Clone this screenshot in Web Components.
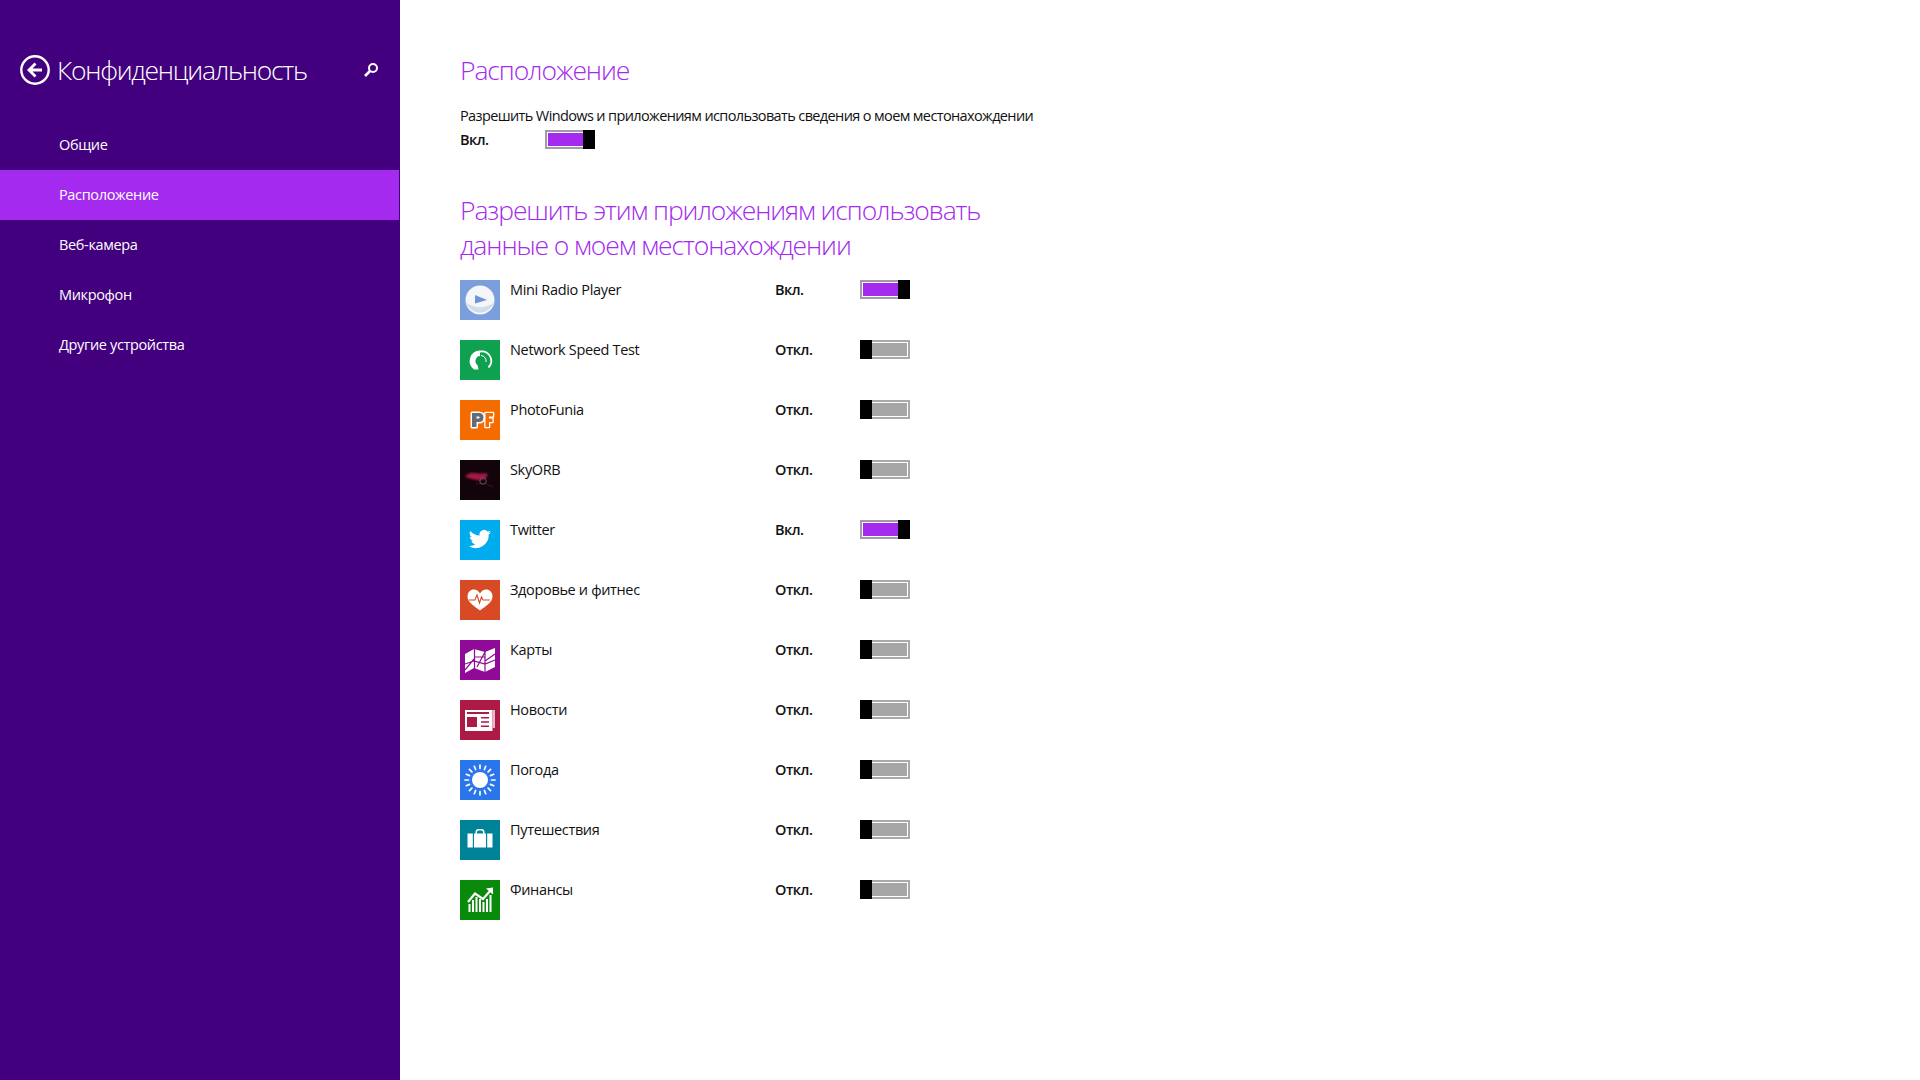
<!DOCTYPE html>
<html lang="ru">
<head>
<meta charset="utf-8">
<title>Конфиденциальность</title>
<style>
  html, body { margin: 0; padding: 0; height: 100%; background: #fff; }
  body { font-family: "Open Sans", "Noto Sans", sans-serif; overflow: hidden; }
  privacy-page { height: 100%; }
</style>
</head>
<body>
<privacy-page>
  <side-bar slot="side" heading="Конфиденциальность">
    <nav-item>Общие</nav-item>
    <nav-item selected>Расположение</nav-item>
    <nav-item>Веб-камера</nav-item>
    <nav-item>Микрофон</nav-item>
    <nav-item>Другие устройства</nav-item>
  </side-bar>
  <location-panel>
    <app-row name="Mini Radio Player" icon="radio" on></app-row>
    <app-row name="Network Speed Test" icon="speed"></app-row>
    <app-row name="PhotoFunia" icon="funia"></app-row>
    <app-row name="SkyORB" icon="sky"></app-row>
    <app-row name="Twitter" icon="twitter" on></app-row>
    <app-row name="Здоровье и фитнес" icon="health"></app-row>
    <app-row name="Карты" icon="maps"></app-row>
    <app-row name="Новости" icon="news"></app-row>
    <app-row name="Погода" icon="weather"></app-row>
    <app-row name="Путешествия" icon="travel"></app-row>
    <app-row name="Финансы" icon="finance"></app-row>
  </location-panel>
</privacy-page>

<script>
const ICONS = {
  radio: {bg: '#7b9fdc', svg: `
    <circle cx="20" cy="20" r="14.5" fill="#f4f6fa"/>
    <path d="M6 22a14.500 14.500 0 0 0 28 0a16 10 0 0 1-28 0z" fill="#d5dbe8"/>
    <path d="M15 15l12 5-12 3.500z" fill="#6f94d6"/>`},
  speed: {bg: '#0fa14f', svg: `
    <path d="M14 29.500A10.500 10.500 0 0 1 20 10.500V16A5 5 0 0 0 17.500 25L18.500 29.500z" fill="#fff"/>
    <path d="M20 11.500A9.500 9.500 0 0 1 28.500 27.500" fill="none" stroke="#fff" stroke-width="1.800"/>
    <path d="M21 15.500A5.500 5.500 0 0 1 26 22" fill="none" stroke="#fff" stroke-width="1"/>`},
  funia: {bg: '#f46c00', svg: `
    <path d="M12 13h7q4.500 0 4.500 4.500t-4.500 4.500h-2.500v5H12z M16.500 16.500v2h2q1.200 0 1.200-1t-1.200-1z" fill="#666b78" fill-rule="evenodd" stroke="#fff" stroke-width="3" stroke-linejoin="round" paint-order="stroke"/>
    <path d="M25.500 13H33v3.500h-4v2h3.500V22H29v5h-3.500z" fill="#f46c00" stroke="#fff" stroke-width="2.600" stroke-linejoin="round" paint-order="stroke"/>`},
  sky: {bg: '#13030b', svg: `
    <defs><filter id="soft"><feGaussianBlur stdDeviation="0.8"/></filter></defs>
    <path d="M5 17q4-5 10-4t11 0q3 2 0 5-5 3-10 2t-11-3z" fill="#a81845" filter="url(#soft)"/>
    <circle cx="23" cy="21" r="3.200" fill="none" stroke="#6a5a60" stroke-width="1"/>
    <path d="M16 23l4 1M26 24l7 3" stroke="#4c1026" stroke-width="1"/>`},
  twitter: {bg: '#00aced', svg: `
    <path d="M31 12.200a8.800 8.800 0 0 1-2.600.7 4.500 4.500 0 0 0 2-2.500 9 9 0 0 1-2.900 1.100 4.500 4.500 0 0 0-7.800 4.100A12.900 12.900 0 0 1 10.400 11a4.500 4.500 0 0 0 1.400 6 4.500 4.500 0 0 1-2-.6c0 2.300 1.600 4.100 3.600 4.500a4.500 4.500 0 0 1-2 .1 4.500 4.500 0 0 0 4.200 3.100A9.100 9.100 0 0 1 9 26a12.800 12.800 0 0 0 19.700-11.400A9 9 0 0 0 31 12.200z" fill="#fff"/>`},
  health: {bg: '#d84a26', svg: `
    <path d="M20 30.500C14 26 7.500 22 7.500 16.500a6.500 6.500 0 0 1 12.500-3A6.500 6.500 0 0 1 32.500 16.500c0 5.500-6.500 9.500-12.500 14z" fill="#fff"/>
    <path d="M9 20h6l2-5 2.500 8 2-6 1.500 3h7" fill="none" stroke="#d84a26" stroke-width="1.100"/>`},
  maps: {bg: '#8f0a96', svg: `
    <path d="M5 14l9-5 11 3 10-4v19l-10 5-11-4-9 5z" fill="#fff"/>
    <path d="M14.500 8v24M25 11v22M5 24l9-3 11 3 10-4M5 30l9-11M25 21l10-7M17 27l8-15M14.500 17H25" fill="none" stroke="#8f0a96" stroke-width="1.200"/>`},
  news: {bg: '#ac1a45', svg: `
    <path d="M5 10h27.500v21H5z" fill="#fff"/>
    <path d="M32.500 10H35v18h-2.500z" fill="#e9b9c6"/>
    <path d="M7 12h22v2H7zM7 17h10v10H7zM21 17h8v1.600h-8zM21 21.200h8v1.600h-8zM21 25.400h8V27h-8z" fill="#ac1a45"/>`},
  weather: {bg: '#2b75ea', svg: `
    <circle cx="20" cy="20" r="8" fill="#fff"/>
    <g stroke="#fff" stroke-width="1.700" stroke-linecap="round">
      <path d="M20 5v3.500M20 31.500V35M5 20h3.500M31.500 20H35M9.400 9.400l2.500 2.500M28.100 28.100l2.500 2.500M9.400 30.600l2.500-2.500M28.100 11.900l2.500-2.500M14.300 6.300l1.300 3.200M24.400 30.500l1.300 3.200M6.300 25.700l3.200-1.300M30.500 15.600l3.200-1.300M6.300 14.300l3.200 1.300M30.500 24.400l3.200 1.300M14.300 33.700l1.300-3.200M24.400 9.500l1.300-3.200"/>
    </g>`},
  travel: {bg: '#008299', svg: `
    <path d="M7.500 13.500h5.300v14H7.500zM27.200 13.500h5.300v14h-5.300z" fill="#fff"/>
    <path d="M14 13.500h1.500V12q0-3 3-3h3q3 0 3 3v1.500H26v14H14z M17 13.500h6V12q0-1.500-1.500-1.500h-3Q17 10.500 17 12z" fill="#fff" fill-rule="evenodd"/>`},
  finance: {bg: '#0a8a0a', svg: `
    <path d="M8.500 24h2v8h-2zM12 20h2v12h-2zM15.500 17h2v15h-2zM19 19h2v13h-2zM22.500 22h2v10h-2zM26 19h2v13h-2zM29.500 15h2v17h-2z" fill="#fff"/>
    <path d="M8 22l7-8.500 8 5.500 7.500-8.500" fill="none" stroke="#fff" stroke-width="2.200"/>
    <path d="M26 8.500l7-1v7z" fill="#fff"/>`}
};

class PrivacyPage extends HTMLElement {
  constructor() {
    super();
    this.attachShadow({mode: 'open'}).innerHTML = `
      <style>
        :host { display: flex; width: 100%; min-height: 100%; }
      </style>
      <slot name="side"></slot>
      <slot></slot>
    `;
  }
}

class SideBar extends HTMLElement {
  constructor() {
    super();
    this.attachShadow({mode: 'open'}).innerHTML = `
      <style>
        :host {
          display: block;
          flex: none;
          box-sizing: border-box;
          width: 400px;
          height: 1080px;
          background: #42007e;
          color: #fff;
        }
        header {
          display: flex;
          align-items: center;
          height: 120px;
          padding: 20px 21px 0 20px;
          box-sizing: border-box;
        }
        .back { flex: none; display: block; }
        h1 {
          flex: 1;
          margin: 0 0 0 7px;
          font: 300 26.500px "Open Sans", "Noto Sans", sans-serif;
          letter-spacing: -1.25px;
          white-space: nowrap;
        }
        .search { flex: none; display: block; }
      </style>
      <header>
        <svg class="back" width="30" height="30" viewBox="0 0 30 30">
          <circle cx="15" cy="15" r="13.700" fill="none" stroke="#fff" stroke-width="2.400"/>
          <path d="M15.500 8.500L9 15l6.500 6.500M9.500 15H22" fill="none" stroke="#fff" stroke-width="2.800"/>
        </svg>
        <h1></h1>
        <svg class="search" width="16" height="16" viewBox="0 0 16 16">
          <circle cx="10" cy="6" r="4" fill="none" stroke="#fff" stroke-width="2"/>
          <path d="M7 9l-5 5" stroke="#fff" stroke-width="2.600"/>
        </svg>
      </header>
      <slot></slot>
    `;
  }
  connectedCallback() {
    this.shadowRoot.querySelector('h1').textContent = this.getAttribute('heading');
  }
}

class NavItem extends HTMLElement {
  constructor() {
    super();
    this.attachShadow({mode: 'open'}).innerHTML = `
      <style>
        :host {
          display: flex;
          align-items: center;
          box-sizing: border-box;
          height: 50px;
          padding: 0 0 2px 59px;
          font: 400 14.500px "Open Sans", "Noto Sans", sans-serif;
          letter-spacing: -0.35px;
          color: #fff;
        }
        :host([selected]) { background: #a32aee; margin-right: 1px; }
      </style>
      <slot></slot>
    `;
  }
}

class ToggleSwitch extends HTMLElement {
  constructor() {
    super();
    this.attachShadow({mode: 'open'}).innerHTML = `
      <style>
        :host {
          display: flex;
          flex: none;
          box-sizing: border-box;
          width: 50px;
          height: 19px;
          background: #fff;
          border: 2px solid #a9a9a9;
        }
        .fill { flex: 1; margin: 1px; background: #a6a6a6; }
        .thumb { flex: none; width: 12px; margin: -2px; background: #000; }
        :host([on]) { border-color: #a39aa9; }
        :host([on]) .fill { background: #a32aee; margin-right: 2px; }
        :host([on]) .thumb { order: 1; }
        :host(:not([on])) .fill { margin-left: 2px; }
      </style>
      <div class="thumb"></div>
      <div class="fill"></div>
    `;
  }
}

class AppRow extends HTMLElement {
  constructor() {
    super();
    this.attachShadow({mode: 'open'}).innerHTML = `
      <style>
        :host {
          display: grid;
          grid-template-columns: 40px 255px 75px 50px;
          column-gap: 10px;
          height: 60px;
          font: 400 14.500px "Open Sans", "Noto Sans", sans-serif;
          letter-spacing: -0.34px;
          color: #111;
        }
        .tile { display: block; width: 40px; height: 40px; }
        .name, .state { line-height: 20px; white-space: nowrap; }
        .state { font-weight: 600; letter-spacing: -0.5px; }
      </style>
      <svg class="tile" viewBox="0 0 40 40"></svg>
      <div class="name"></div>
      <div class="state"></div>
      <toggle-switch></toggle-switch>
    `;
  }
  connectedCallback() {
    const root = this.shadowRoot;
    const on = this.hasAttribute('on');
    const icon = ICONS[this.getAttribute('icon')];
    root.querySelector('.tile').innerHTML = `<rect width="40" height="40" fill="${icon.bg}"/>${icon.svg}`;
    root.querySelector('.name').textContent = this.getAttribute('name');
    root.querySelector('.state').textContent = on ? 'Вкл.' : 'Откл.';
    if (on) root.querySelector('toggle-switch').setAttribute('on', '');
  }
}

class LocationPanel extends HTMLElement {
  constructor() {
    super();
    this.attachShadow({mode: 'open'}).innerHTML = `
      <style>
        :host {
          display: block;
          flex: 1;
          box-sizing: border-box;
          padding: 50px 0 0 60px;
          color: #111;
          font: 400 14.500px "Open Sans", "Noto Sans", sans-serif;
        }
        h2 {
          margin: 0;
          font: 300 26.500px/40px "Open Sans", "Noto Sans", sans-serif;
          letter-spacing: -1.1px;
          color: #a32aee;
        }
        p { margin: 16px 0 0; line-height: 20px; white-space: nowrap; letter-spacing: -0.62px; }
        .master { display: flex; align-items: center; height: 19px; margin-top: 4px; }
        .master b { font-weight: 600; width: 85px; letter-spacing: -0.5px; }
        h2.apps { margin-top: 44px; line-height: 35px; width: 560px; margin-bottom: 17px; }
      </style>
      <h2>Расположение</h2>
      <p>Разрешить Windows и приложениям использовать сведения о моем местонахождении</p>
      <div class="master"><b>Вкл.</b><toggle-switch on></toggle-switch></div>
      <h2 class="apps">Разрешить этим приложениям использовать данные о моем местонахождении</h2>
      <slot></slot>
    `;
  }
}

customElements.define('privacy-page', PrivacyPage);
customElements.define('side-bar', SideBar);
customElements.define('nav-item', NavItem);
customElements.define('toggle-switch', ToggleSwitch);
customElements.define('app-row', AppRow);
customElements.define('location-panel', LocationPanel);
</script>
</body>
</html>
